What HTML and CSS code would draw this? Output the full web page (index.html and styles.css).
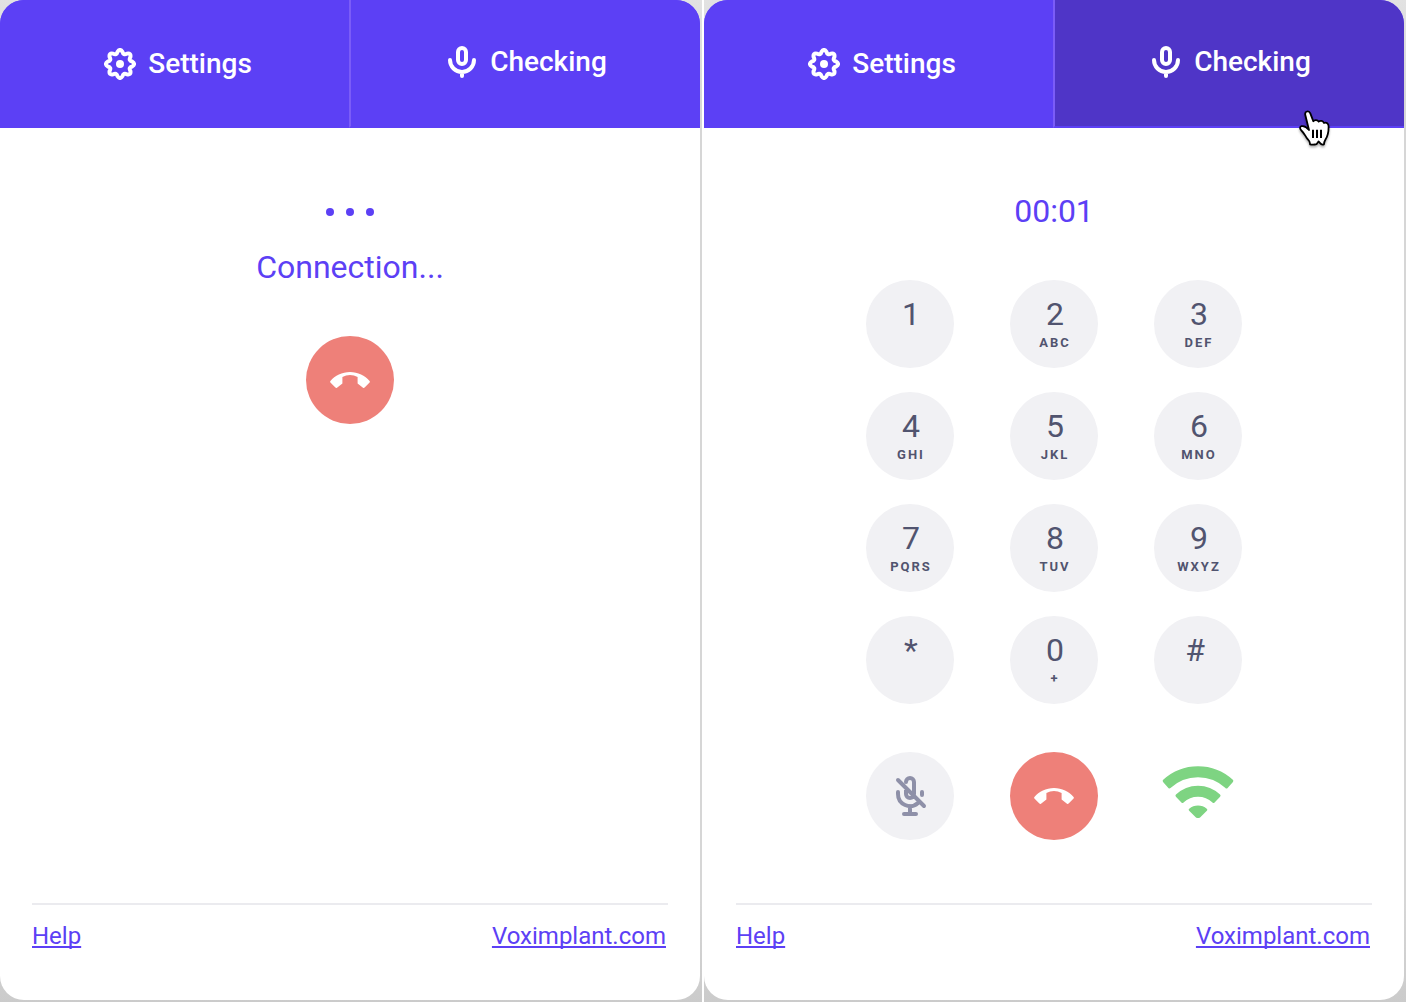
FILE: index.html
```html
<!DOCTYPE html>
<html lang="en">
<head>
<meta charset="utf-8">
<meta name="viewport" content="width=device-width, initial-scale=1">
<title>Voximplant phone</title>
<link rel="stylesheet" href="styles.css">
</head>
<body>
<svg class="sprite" aria-hidden="true">
  <symbol id="gear" viewBox="-16 -16 32 32">
    <path fill="none" stroke="currentColor" stroke-width="4" stroke-linejoin="round" d="M12.26-2.44Q15.9 0 12.26 2.44Q8.31 3.44 10.39 6.94Q11.24 11.24 6.94 10.39Q3.44 8.31 2.44 12.26Q0 15.9-2.44 12.26Q-3.44 8.31-6.94 10.39Q-11.24 11.24-10.39 6.94Q-8.31 3.44-12.26 2.44Q-15.9 0-12.26-2.44Q-8.31-3.44-10.39-6.94Q-11.24-11.24-6.94-10.39Q-3.44-8.31-2.44-12.26Q0-15.9 2.44-12.26Q3.44-8.31 6.94-10.39Q11.24-11.24 10.39-6.94Q8.31-3.44 12.26-2.44Z"/>
    <circle r="4" fill="currentColor"/>
  </symbol>
  <symbol id="mic" viewBox="0 0 32 32">
    <g fill="none" stroke="currentColor" stroke-width="4" stroke-linecap="round">
      <rect x="12" y="2" width="8" height="16" rx="4"/>
      <path d="M4 14a12 12 0 0 0 24 0M16 26v4"/>
    </g>
  </symbol>
  <symbol id="mic-off" viewBox="0 0 40 40">
    <g fill="none" stroke="currentColor" stroke-width="4" stroke-linecap="round">
      <path d="M16 6a4 4 0 0 1 8 0v12a4 4 0 0 1-8 0v-4M8 16v2a12 12 0 0 0 20 9M32 16v3M20 30v8M14 38h12M8 4l26 26"/>
    </g>
  </symbol>
  <symbol id="hangup" viewBox="0 0 40 16">
    <path fill="currentColor" d="M.4 9C5 3.5 12 0 20 0S35 3.5 39.6 9q.6.8 0 1.5l-5 5q-.8.8-1.6.2l-5.4-4.2V5Q24 3 20 3T12.400 5v6.500l-5.400 4.200q-.8.6-1.600-.2l-5-5q-.6-.7 0-1.500z"/>
  </symbol>
  <symbol id="signal" viewBox="0 0 72 60">
    <path fill="currentColor" stroke="currentColor" stroke-width="3" stroke-linejoin="round" d="M2.200 14.900A50 50 0 0 1 69.800 14.900L64.500 21A42 42 0 0 0 7.500 21zM15 29.700A30.300 30.300 0 0 1 57 29.700L51.500 35.500A22.300 22.300 0 0 0 20.500 35.500zM28.200 43.800A12 12 0 0 1 43.800 43.800L37 50.500h-2z"/>
  </symbol>
</svg>

<section class="frame">
  <div class="phone">
    <nav class="tabs">
      <button class="tab" type="button"><svg class="tab-icon" aria-hidden="true"><use href="#gear"/></svg>Settings</button>
      <button class="tab tab-checking" type="button"><svg class="tab-icon" aria-hidden="true"><use href="#mic"/></svg>Checking</button>
    </nav>
    <main class="call">
      <div class="dots" aria-hidden="true"><span class="dot"></span><span class="dot"></span><span class="dot"></span></div>
      <p class="status">Connection...</p>
      <button class="round hangup" type="button" aria-label="End call"><svg class="hangup-icon"><use href="#hangup"/></svg></button>
    </main>
    <footer class="footer"><a class="link" href="#help">Help</a><a class="link" href="#site">Voximplant.com</a></footer>
  </div>
</section>

<section class="frame">
  <div class="phone">
    <nav class="tabs">
      <button class="tab" type="button"><svg class="tab-icon" aria-hidden="true"><use href="#gear"/></svg>Settings</button>
      <button class="tab tab-checking tab-hover" type="button"><svg class="tab-icon" aria-hidden="true"><use href="#mic"/></svg>Checking</button>
      <svg class="cursor" viewBox="0 0 34 38" aria-hidden="true">
        <path fill="#fff" stroke="#000" stroke-width="1.800" stroke-linejoin="round" d="M7.300 5C6.400 1 11 .2 12.300 3.400L15.300 11.200C16.500 9.600 19.500 9.600 20.600 11.600C22.500 10.200 25 10.800 26 13C28.500 12 30.600 13.500 30.600 16.500C30.700 22 30 25.500 27.500 29.500C26.300 31.500 26 32.500 26 34.300C24.500 34.800 23 34.500 22 33L20.500 31.500L18.500 34.200C16.500 34.800 14 34.800 12 34.300C12.300 31.500 11 30.500 9.500 29C7.500 26.500 6.500 23.500 3.800 21C1.500 18.800 1.500 16.800 3.500 16.200C6.500 15.500 9 17.500 11 20z"/>
        <path stroke="#000" stroke-width="2" d="M15 19.700v8.300M19 19.700v8.300M23 19.700v8.300"/>
      </svg>
    </nav>
    <main class="call">
      <p class="timer">00:01</p>
      <div class="keypad">
        <button class="round key" type="button">1</button>
        <button class="round key" type="button">2<span class="letters">ABC</span></button>
        <button class="round key" type="button">3<span class="letters">DEF</span></button>
        <button class="round key" type="button">4<span class="letters">GHI</span></button>
        <button class="round key" type="button">5<span class="letters">JKL</span></button>
        <button class="round key" type="button">6<span class="letters">MNO</span></button>
        <button class="round key" type="button">7<span class="letters">PQRS</span></button>
        <button class="round key" type="button">8<span class="letters">TUV</span></button>
        <button class="round key" type="button">9<span class="letters">WXYZ</span></button>
        <button class="round key" type="button">*</button>
        <button class="round key" type="button">0<span class="letters">+</span></button>
        <button class="round key" type="button">#&nbsp;</button>
      </div>
      <div class="actions">
        <button class="round mute" type="button" aria-label="Mute microphone"><svg class="mute-icon"><use href="#mic-off"/></svg></button>
        <button class="round hangup" type="button" aria-label="End call"><svg class="hangup-icon"><use href="#hangup"/></svg></button>
        <svg class="signal" role="img" aria-label="Good signal"><use href="#signal"/></svg>
      </div>
    </main>
    <footer class="footer"><a class="link" href="#help">Help</a><a class="link" href="#site">Voximplant.com</a></footer>
  </div>
</section>
</body>
</html>
```
FILE: styles.css
```css
:root {
  --accent: #5c40f5;
  --accent-dark: #4f35c7;
  --accent-light: #7b5cf8;
  --danger: #ee8079;
  --key: #f1f1f4;
  --ink: #51546f;
}

* { box-sizing: border-box; }

body {
  margin: 0;
  min-height: 100vh;
  display: grid;
  grid-template-columns: 1fr 1fr;
  gap: 2px;
  background: #fff;
  font-family: Roboto, "Liberation Sans", sans-serif;
  color: var(--accent);
}

p { margin: 0; }

button {
  margin: 0;
  padding: 0;
  border: 0;
  font: inherit;
  cursor: pointer;
}

.sprite {
  position: absolute;
  width: 0;
  height: 0;
}

.frame {
  display: flex;
  padding: 0 2px 2px 0;
  background: linear-gradient(#e2e2e2, #d6d6d6 10%, #d6d6d6 90%, #cbcbcb);
}

.phone {
  flex: 1;
  display: flex;
  flex-direction: column;
  border-radius: 24px;
  background: #fff;
}

.tabs {
  position: relative;
  display: grid;
  grid-template-columns: 1fr 1fr;
  height: 128px;
  border-radius: 24px 24px 0 0;
  background: var(--accent);
}

.tab {
  display: flex;
  align-items: center;
  justify-content: center;
  gap: 12px;
  padding-left: 6px;
  border-radius: 24px 0 0;
  background: var(--accent);
  color: #fff;
  font-size: 28px;
  font-weight: 500;
  line-height: 32px;
}

.tab-checking {
  margin-left: -1px;
  padding-left: 2px;
  padding-bottom: 2px;
  border-left: 2px solid var(--accent-light);
  border-bottom: 2px solid var(--accent);
  border-radius: 0 24px 0 0;
}

.tab-hover { background: var(--accent-dark); }

.tab-icon {
  width: 32px;
  height: 32px;
}

.cursor {
  position: absolute;
  right: 72px;
  bottom: -20px;
  width: 34px;
  height: 38px;
  filter: drop-shadow(0 2px 1px rgba(0, 0, 0, .3));
}

.call {
  flex: 1;
  display: flex;
  flex-direction: column;
  align-items: center;
}

.dots {
  display: flex;
  gap: 12px;
  padding-top: 80px;
}

.dot {
  width: 8px;
  height: 8px;
  border-radius: 50%;
  background: var(--accent);
}

.status,
.timer {
  font-size: 32px;
  line-height: 38px;
}

.status { margin: 32px 0 50px; }

.timer { margin: 64px 0 50px; }

.round {
  display: flex;
  align-items: center;
  justify-content: center;
  width: 88px;
  height: 88px;
  border-radius: 50%;
}

.hangup {
  background: var(--danger);
  color: #fff;
}

.hangup-icon {
  width: 40px;
  height: 16px;
}

.keypad,
.actions {
  display: grid;
  grid-template-columns: repeat(3, 88px);
  gap: 24px 56px;
}

.key {
  flex-direction: column;
  justify-content: flex-start;
  padding: 16px 0 0 2px;
  background: var(--key);
  color: var(--ink);
  font-size: 32px;
  line-height: 36px;
}

.letters {
  font-size: 13px;
  font-weight: 700;
  letter-spacing: 2px;
  line-height: 22px;
}

.actions {
  align-items: center;
  justify-items: center;
  margin: 48px 0;
}

.mute {
  background: var(--key);
  color: #8e90a8;
}

.mute-icon {
  width: 40px;
  height: 40px;
}

.signal {
  width: 72px;
  height: 60px;
  color: #7ed482;
}

.footer {
  display: flex;
  justify-content: space-between;
  margin: 0 32px;
  padding: 16px 2px 48px 0;
  border-top: 2px solid #ebebef;
}

.link {
  color: var(--accent);
  font-size: 24px;
  line-height: 31px;
  text-decoration-thickness: 2px;
  text-underline-offset: 2px;
  text-decoration-skip-ink: none;
}
```
